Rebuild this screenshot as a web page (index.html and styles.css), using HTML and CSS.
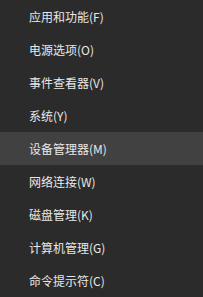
FILE: index.html
```html
<!DOCTYPE html>
<html>
<head>
  <title>Win+X</title>
  <meta charset="UTF-8">
  <link rel="stylesheet" href="styles.css">
</head>
<body>
  <ul class="menu">
    <li class="menu-item">应用和功能(F)</li>
    <li class="menu-item">电源选项(O)</li>
    <li class="menu-item">事件查看器(V)</li>
    <li class="menu-item">系统(Y)</li>
    <li class="menu-item active">设备管理器(M)</li>
    <li class="menu-item">网络连接(W)</li>
    <li class="menu-item">磁盘管理(K)</li>
    <li class="menu-item">计算机管理(G)</li>
    <li class="menu-item">命令提示符(C)</li>
  </ul>
</body>
</html>
```

FILE: styles.css
```css
body {
  margin: 0;
  background-color: #2b2b2b;
  font-family: "Noto Sans CJK SC", "Noto Sans", sans-serif;
}

.menu {
  list-style: none;
  margin: 0;
  padding: 0;
  width: 203px;
}

.menu-item {
  height: 33px;
  line-height: 33px;
  padding-left: 29px;
  font-size: 12px;
  color: #e8e8e8;
  white-space: nowrap;
}

.menu-item.active {
  background-color: #414141;
}
```
